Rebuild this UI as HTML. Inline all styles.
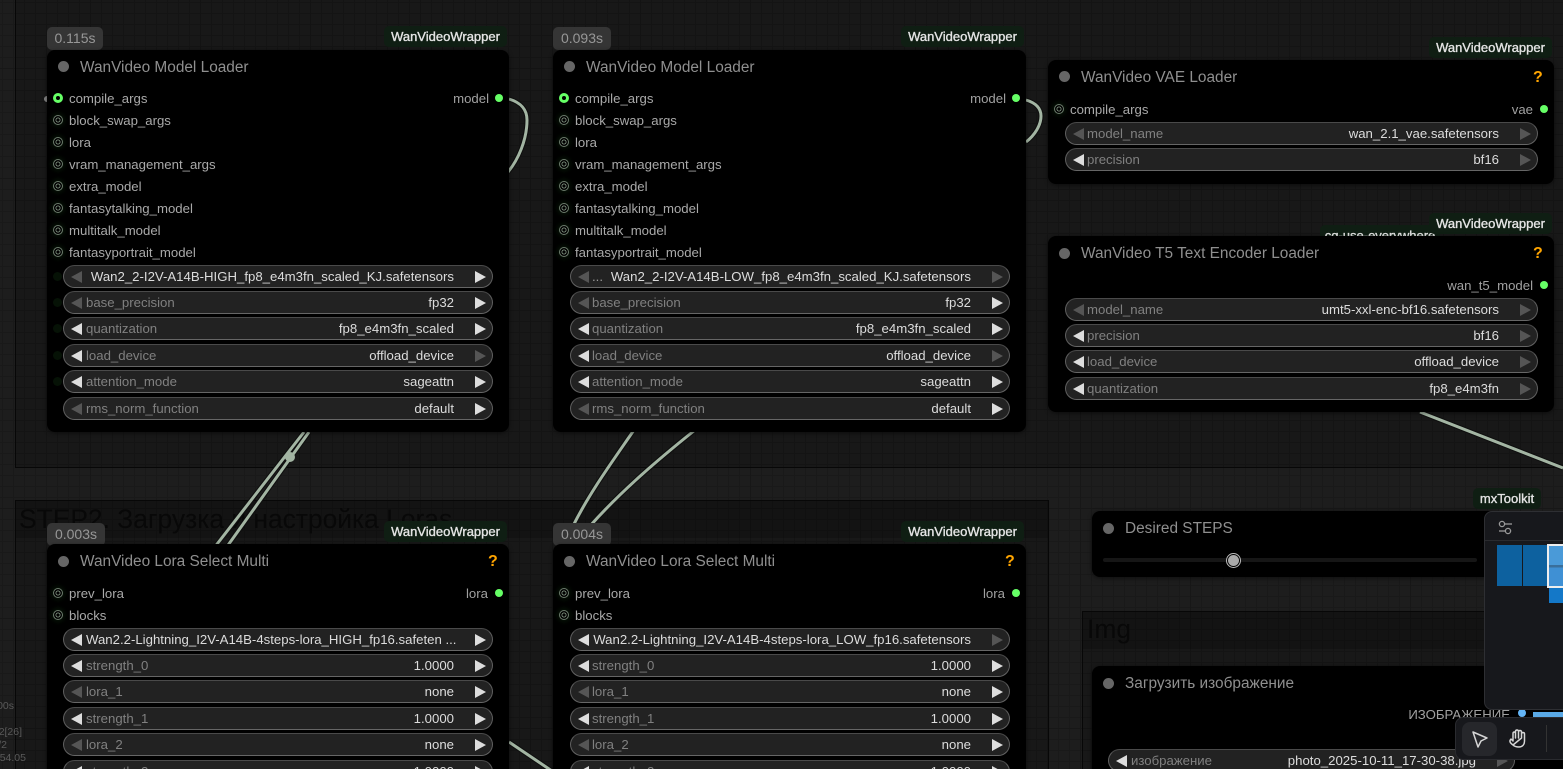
<!DOCTYPE html>
<html><head><meta charset="utf-8">
<style>
html,body{margin:0;padding:0;width:1563px;height:769px;overflow:hidden;background:#1d1d1d}
body{position:relative;font-family:"Liberation Sans","Noto Sans CJK SC",sans-serif}
.bg{position:absolute;left:0;top:0;width:1563px;height:769px;background-image:linear-gradient(90deg,#171717 1px,transparent 1px),linear-gradient(#171717 1px,transparent 1px),linear-gradient(90deg,#191919 1px,transparent 1px),linear-gradient(#191919 1px,transparent 1px);background-size:110px 110px,110px 110px,11px 11px,11px 11px;background-position:90px 0,0 68px,2px 0,0 2px}
.g{position:absolute;background:rgba(0,0,0,.17);border:1px solid #070707;box-sizing:border-box}
.band{position:absolute;background:rgba(0,0,0,.2)}
.gt{position:absolute;color:#080808;font-size:26.4px;line-height:30px;white-space:nowrap}
svg{position:absolute;left:0;top:0}
.n{position:absolute;background:#000;border-radius:8px;box-shadow:0 1px 4px rgba(0,0,0,.5)}
.t{position:absolute;color:#8f8f8f;font-size:15.4px;line-height:18px;white-space:nowrap;margin-top:1px}
.d0{position:absolute;width:11px;height:11px;border-radius:50%;background:#666}
.in{position:absolute;color:#a9a9a9;font-size:13.2px;line-height:16px;white-space:nowrap}
.out{position:absolute;color:#a0a0a0;font-size:13.2px;line-height:16px;white-space:nowrap}
.p{position:absolute;width:8px;height:8px;margin:-1px 0 0 -1px;border-radius:50%;border:1px solid #6d7d6d;box-sizing:content-box;background:radial-gradient(circle,#000 0 1.5px,#6d7d6d 1.6px 2.5px,#000 2.6px);box-shadow:0 0 4px 2px #061206}
.o{position:absolute;width:8px;height:8px;border-radius:50%;background:#66ff66}
.c{position:absolute;width:4px;height:4px;border-radius:50%;border:3px solid #66ff66;background:#000}
.gh{position:absolute;width:9px;height:9px;border-radius:50%;background:#061206}
.w{position:absolute;height:23px;box-sizing:border-box;background:#222;border:1px solid #5f5f5f;border-top-color:#4a4a4a;border-bottom-color:#666;border-radius:12px;font-size:13.2px;line-height:21.500px;white-space:nowrap}
.w b{font-weight:normal;position:absolute;left:22px;color:#808080}
.m b{left:21px}
.w u{text-decoration:none;position:absolute;right:38px;color:#dcdcdc}
.w i,.w s{position:absolute;top:4.5px;width:0;height:0;border-top:6px solid transparent;border-bottom:6px solid transparent}
.w i{left:7px;border-right:11px solid #ddd}
.w s{right:6px;border-left:11px solid #ddd}
.w i.x{border-right-color:#555}.w s.x{border-left-color:#555}
.bd{position:absolute;height:21px;background:#0f1e13;border-radius:5px;color:#e4e4e4;font-size:13px;font-weight:normal;-webkit-text-stroke:.35px #e4e4e4;line-height:21px;text-align:center;white-space:nowrap;overflow:hidden}
.tm{position:absolute;height:23px;background:#353535;border-radius:5px;color:#979797;font-size:14px;line-height:23px;text-align:center}
.q{position:absolute;color:#ffa500;font-size:16px;font-weight:bold;line-height:18px;margin-top:1px}
.st{position:absolute;color:#5a5a5a;font-size:10.5px;line-height:12px;white-space:nowrap;word-spacing:-3px}
</style></head><body>
<div class="bg"></div>
<div class="g" style="left:15px;top:-10px;width:1600px;height:478px"></div>
<div class="g" style="left:15px;top:500px;width:1034px;height:300px"></div>
<div class="band" style="left:16px;top:501px;width:1032px;height:37px"></div>
<div class="g" style="left:1082px;top:611px;width:500px;height:200px"></div>
<div class="band" style="left:1083px;top:612px;width:480px;height:37px"></div>
<div class="gt" style="left:19px;top:504px">STEP2. Загрузка и настройка Loras</div>
<div class="gt" style="left:1087px;top:614px">Img</div>

<svg width="1563" height="769" fill="none" stroke="#0e0e0e" stroke-width="5">
<path d="M509 99C522 103 527 110 527 120C527 140 518 160 508 172"/>
<path d="M1026 100C1036 103 1041 108 1041 116C1041 125 1035 135 1026 142"/>
<path d="M304 432L214 548"/><path d="M309 432L226 548"/>
<path d="M634 430C612 462 590 492 573 526"/><path d="M695 430C660 458 622 490 590 526"/>
<path d="M1420 412L1563 468"/>
<path d="M509 742L552 771"/>
</svg>
<svg width="1563" height="769" fill="none" stroke="#a3b5a3" stroke-width="3">
<path d="M509 99C522 103 527 110 527 120C527 140 518 160 508 172"/>
<path d="M1026 100C1036 103 1041 108 1041 116C1041 125 1035 135 1026 142"/>
<path d="M304 432L214 548"/><path d="M309 432L226 548"/>
<path d="M634 430C612 462 590 492 573 526"/><path d="M695 430C660 458 622 490 590 526"/>
<path d="M1420 412L1563 468"/>
<path d="M509 742L552 771"/>
<circle cx="290" cy="457" r="5" fill="#a3b5a3" stroke="none"/>
</svg>

<div class="tm" style="left:47px;top:27px;width:56px">0.115s</div>
<div class="bd" style="left:384px;top:26px;width:123px">WanVideoWrapper</div>
<div class="tm" style="left:553px;top:27px;width:58px">0.093s</div>
<div class="bd" style="left:901px;top:26px;width:123px">WanVideoWrapper</div>
<div class="bd" style="left:1429px;top:37px;width:123px">WanVideoWrapper</div>
<div class="bd" style="left:1320px;top:225px;width:120px;text-align:center">cg-use-everywhere</div>
<div class="bd" style="left:1429px;top:213px;width:123px">WanVideoWrapper</div>
<div class="tm" style="left:47px;top:523px;width:58px">0.003s</div>
<div class="bd" style="left:384px;top:521px;width:123px">WanVideoWrapper</div>
<div class="tm" style="left:553px;top:523px;width:58px">0.004s</div>
<div class="bd" style="left:901px;top:521px;width:123px">WanVideoWrapper</div>
<div class="bd" style="left:1473px;top:488px;width:68px">mxToolkit</div>

<div style="position:absolute;left:44px;top:96px;width:6px;height:6px;border-radius:50%;background:#888"></div>

<!-- Node 1 -->
<div class="n" style="left:47px;top:50px;width:462px;height:382px"></div>
<div class="d0" style="left:58px;top:61px"></div><div class="t" style="left:80px;top:58px">WanVideo Model Loader</div>
<div class="c" style="left:53px;top:93px"></div><div class="in" style="left:69px;top:91px">compile_args</div>
<div class="out" style="right:1074px;top:91px">model</div><div class="o" style="left:495px;top:94px"></div>
<div class="p" style="left:54px;top:116px"></div><div class="in" style="left:69px;top:113px">block_swap_args</div>
<div class="p" style="left:54px;top:138px"></div><div class="in" style="left:69px;top:135px">lora</div>
<div class="p" style="left:54px;top:160px"></div><div class="in" style="left:69px;top:157px">vram_management_args</div>
<div class="p" style="left:54px;top:182px"></div><div class="in" style="left:69px;top:179px">extra_model</div>
<div class="p" style="left:54px;top:204px"></div><div class="in" style="left:69px;top:201px">fantasytalking_model</div>
<div class="p" style="left:54px;top:226px"></div><div class="in" style="left:69px;top:223px">multitalk_model</div>
<div class="p" style="left:54px;top:248px"></div><div class="in" style="left:69px;top:245px">fantasyportrait_model</div>
<div class="gh" style="left:53px;top:272px"></div><div class="gh" style="left:53px;top:298px"></div><div class="gh" style="left:53px;top:324px"></div><div class="gh" style="left:53px;top:351px"></div><div class="gh" style="left:53px;top:377px"></div>
<div class="w" style="left:63px;top:265px;width:430px"><i class="x"></i><s></s><u>Wan2_2-I2V-A14B-HIGH_fp8_e4m3fn_scaled_KJ.safetensors</u></div>
<div class="w" style="left:63px;top:291px;width:430px"><i class="x"></i><s></s><b>base_precision</b><u>fp32</u></div>
<div class="w" style="left:63px;top:317px;width:430px"><i></i><s></s><b>quantization</b><u>fp8_e4m3fn_scaled</u></div>
<div class="w" style="left:63px;top:344px;width:430px"><i></i><s class="x"></s><b>load_device</b><u>offload_device</u></div>
<div class="w" style="left:63px;top:370px;width:430px"><i></i><s></s><b>attention_mode</b><u>sageattn</u></div>
<div class="w" style="left:63px;top:397px;width:430px"><i class="x"></i><s></s><b>rms_norm_function</b><u>default</u></div>

<!-- Node 2 -->
<div class="n" style="left:553px;top:50px;width:473px;height:382px"></div>
<div class="d0" style="left:564px;top:61px"></div><div class="t" style="left:586px;top:58px">WanVideo Model Loader</div>
<div class="c" style="left:559px;top:93px"></div><div class="in" style="left:575px;top:91px">compile_args</div>
<div class="out" style="right:557px;top:91px">model</div><div class="o" style="left:1012px;top:94px"></div>
<div class="p" style="left:560px;top:116px"></div><div class="in" style="left:575px;top:113px">block_swap_args</div>
<div class="p" style="left:560px;top:138px"></div><div class="in" style="left:575px;top:135px">lora</div>
<div class="p" style="left:560px;top:160px"></div><div class="in" style="left:575px;top:157px">vram_management_args</div>
<div class="p" style="left:560px;top:182px"></div><div class="in" style="left:575px;top:179px">extra_model</div>
<div class="p" style="left:560px;top:204px"></div><div class="in" style="left:575px;top:201px">fantasytalking_model</div>
<div class="p" style="left:560px;top:226px"></div><div class="in" style="left:575px;top:223px">multitalk_model</div>
<div class="p" style="left:560px;top:248px"></div><div class="in" style="left:575px;top:245px">fantasyportrait_model</div>
<div class="w m" style="left:570px;top:265px;width:440px"><i class="x"></i><s class="x"></s><b style="color:#999">...</b><u>Wan2_2-I2V-A14B-LOW_fp8_e4m3fn_scaled_KJ.safetensors</u></div>
<div class="w m" style="left:570px;top:291px;width:440px"><i class="x"></i><s></s><b>base_precision</b><u>fp32</u></div>
<div class="w m" style="left:570px;top:317px;width:440px"><i></i><s></s><b>quantization</b><u>fp8_e4m3fn_scaled</u></div>
<div class="w m" style="left:570px;top:344px;width:440px"><i></i><s class="x"></s><b>load_device</b><u>offload_device</u></div>
<div class="w m" style="left:570px;top:370px;width:440px"><i></i><s></s><b>attention_mode</b><u>sageattn</u></div>
<div class="w m" style="left:570px;top:397px;width:440px"><i class="x"></i><s></s><b>rms_norm_function</b><u>default</u></div>

<!-- VAE -->
<div class="n" style="left:1048px;top:60px;width:506px;height:124px"></div>
<div class="d0" style="left:1059px;top:71px"></div><div class="t" style="left:1081px;top:68px">WanVideo VAE Loader</div>
<div class="q" style="left:1533px;top:68px">?</div>
<div class="p" style="left:1055px;top:105px"></div><div class="in" style="left:1070px;top:102px">compile_args</div>
<div class="out" style="right:30px;top:102px">vae</div><div class="o" style="left:1540px;top:105px"></div>
<div class="w m" style="left:1065px;top:122px;width:473px"><i class="x"></i><s class="x"></s><b>model_name</b><u>wan_2.1_vae.safetensors</u></div>
<div class="w m" style="left:1065px;top:148px;width:473px"><i></i><s class="x"></s><b>precision</b><u>bf16</u></div>

<!-- T5 -->
<div class="n" style="left:1048px;top:236px;width:506px;height:176px"></div>
<div class="d0" style="left:1059px;top:248px"></div><div class="t" style="left:1081px;top:244px">WanVideo T5 Text Encoder Loader</div>
<div class="q" style="left:1533px;top:244px">?</div>
<div class="out" style="right:30px;top:278px">wan_t5_model</div><div class="o" style="left:1540px;top:281px"></div>
<div class="w m" style="left:1065px;top:298px;width:473px"><i class="x"></i><s class="x"></s><b>model_name</b><u>umt5-xxl-enc-bf16.safetensors</u></div>
<div class="w m" style="left:1065px;top:324px;width:473px"><i></i><s class="x"></s><b>precision</b><u>bf16</u></div>
<div class="w m" style="left:1065px;top:350px;width:473px"><i></i><s class="x"></s><b>load_device</b><u>offload_device</u></div>
<div class="w m" style="left:1065px;top:377px;width:473px"><i></i><s class="x"></s><b>quantization</b><u>fp8_e4m3fn</u></div>

<!-- Lora 1 -->
<div class="n" style="left:47px;top:544px;width:462px;height:240px"></div>
<div class="d0" style="left:58px;top:556px"></div><div class="t" style="left:80px;top:552px">WanVideo Lora Select Multi</div>
<div class="q" style="left:488px;top:552px">?</div>
<div class="p" style="left:54px;top:589px"></div><div class="in" style="left:69px;top:586px">prev_lora</div>
<div class="out" style="right:1075px;top:586px">lora</div><div class="o" style="left:495px;top:589px"></div>
<div class="p" style="left:54px;top:611px"></div><div class="in" style="left:69px;top:608px">blocks</div>
<div class="w" style="left:63px;top:628px;width:430px"><i></i><s></s><b style="color:#dcdcdc">Wan2.2-Lightning_I2V-A14B-4steps-lora_HIGH_fp16.safeten ...</b></div>
<div class="w" style="left:63px;top:654px;width:430px"><i></i><s></s><b>strength_0</b><u>1.0000</u></div>
<div class="w" style="left:63px;top:680px;width:430px"><i class="x"></i><s></s><b>lora_1</b><u>none</u></div>
<div class="w" style="left:63px;top:707px;width:430px"><i></i><s></s><b>strength_1</b><u>1.0000</u></div>
<div class="w" style="left:63px;top:733px;width:430px"><i class="x"></i><s></s><b>lora_2</b><u>none</u></div>
<div class="w" style="left:63px;top:760px;width:430px"><i></i><s></s><b>strength_2</b><u>1.0000</u></div>

<!-- Lora 2 -->
<div class="n" style="left:553px;top:544px;width:473px;height:240px"></div>
<div class="d0" style="left:564px;top:556px"></div><div class="t" style="left:586px;top:552px">WanVideo Lora Select Multi</div>
<div class="q" style="left:1005px;top:552px">?</div>
<div class="p" style="left:560px;top:589px"></div><div class="in" style="left:575px;top:586px">prev_lora</div>
<div class="out" style="right:558px;top:586px">lora</div><div class="o" style="left:1012px;top:589px"></div>
<div class="p" style="left:560px;top:611px"></div><div class="in" style="left:575px;top:608px">blocks</div>
<div class="w m" style="left:570px;top:628px;width:440px"><i></i><s class="x"></s><u>Wan2.2-Lightning_I2V-A14B-4steps-lora_LOW_fp16.safetensors</u></div>
<div class="w m" style="left:570px;top:654px;width:440px"><i></i><s></s><b>strength_0</b><u>1.0000</u></div>
<div class="w m" style="left:570px;top:680px;width:440px"><i class="x"></i><s></s><b>lora_1</b><u>none</u></div>
<div class="w m" style="left:570px;top:707px;width:440px"><i></i><s></s><b>strength_1</b><u>1.0000</u></div>
<div class="w m" style="left:570px;top:733px;width:440px"><i class="x"></i><s></s><b>lora_2</b><u>none</u></div>
<div class="w m" style="left:570px;top:760px;width:440px"><i></i><s></s><b>strength_2</b><u>1.0000</u></div>

<!-- Desired STEPS -->
<div class="n" style="left:1092px;top:511px;width:410px;height:66px"></div>
<div class="d0" style="left:1103px;top:523px"></div><div class="t" style="left:1125px;top:519px">Desired STEPS</div>
<div style="position:absolute;left:1103px;top:558px;width:374px;height:4px;border-radius:2px;background:#161616"></div>
<div style="position:absolute;left:1226px;top:553px;width:13px;height:13px;border:1px solid #bbb;border-radius:50%;background:#000"></div>
<div style="position:absolute;left:1228px;top:555px;width:11px;height:11px;border-radius:50%;background:#aaa"></div>

<!-- Load image -->
<div class="n" style="left:1092px;top:666px;width:480px;height:120px"></div>
<div class="d0" style="left:1103px;top:678px"></div><div class="t" style="left:1125px;top:674px">Загрузить изображение</div>
<div class="out" style="right:53px;top:707px">ИЗОБРАЖЕНИЕ</div>
<div class="o" style="left:1518px;top:709px;background:#64b5f6"></div>
<div style="position:absolute;left:1533px;top:712px;width:30px;height:5px;background:#5aa9e6"></div>
<div class="w" style="left:1108px;top:749px;width:407px"><i></i><s class="x"></s><b>изображение</b><u>photo_2025-10-11_17-30-38.jpg</u></div>

<!-- Minimap -->
<div style="position:absolute;left:1484px;top:511px;width:90px;height:199px;box-sizing:border-box;background:#17181c;border:1px solid #2e2f33;border-radius:8px;overflow:hidden">
<div style="position:absolute;left:0;top:28px;width:90px;height:1px;background:#2a2b2f"></div>
<div style="position:absolute;left:12px;top:33px;width:25px;height:41px;background:#0d619f"></div>
<div style="position:absolute;left:38px;top:33px;width:24px;height:41px;background:#0d619f"></div>
<div style="position:absolute;left:64px;top:73px;width:20px;height:18px;background:#1478c8"></div>
<div style="position:absolute;left:62px;top:32px;width:30px;height:44px;box-sizing:border-box;border:2px solid #eee;background:linear-gradient(#4a9ad8 0 48%,#3a6f9b 48% 54%,#3f90d4 54%)"></div>
</div>
<svg width="1563" height="769" fill="none" stroke="#9a9a9a" stroke-width="1.3">
<circle cx="1502" cy="524" r="2.6"/><path d="M1505 524H1512"/><circle cx="1508" cy="531" r="2.6"/><path d="M1499 531H1505"/>
</svg>

<!-- Toolbar -->
<div style="position:absolute;left:1455px;top:717px;width:120px;height:43px;box-sizing:border-box;background:#17181c;border:1px solid #2a2b2f;border-radius:8px"></div>
<div style="position:absolute;left:1462px;top:722px;width:35px;height:34px;background:#26272b;border-radius:8px"></div>
<div style="position:absolute;left:1546px;top:725px;width:1px;height:27px;background:#333"></div>
<svg width="1563" height="769" fill="none" stroke="#d6d6d6" stroke-width="1.5" stroke-linejoin="round" stroke-linecap="round">
<path d="M1473 732L1487 738L1481 741L1478 747Z"/>
<path d="M1513 745C1510 743 1509 741 1511 739L1513 741V733.500C1513 731.500 1515.500 731.500 1515.500 733.500V738M1515.500 738V731.500C1515.500 729.500 1518.500 729.500 1518.500 731.500V738M1518.500 738V732C1518.500 730 1521.500 730 1521.500 732V738M1521.500 738V734C1521.500 732 1524.500 732 1524.500 734V741C1524.500 745 1522 747 1519 747C1516.500 747 1514.500 746.500 1513 745Z"/>
</svg>

<div class="st" style="right:1549px;top:700px">00s</div>
<div class="st" style="right:1541px;top:726px">2 [26]</div>
<div class="st" style="right:1556px;top:739px">/2</div>
<div class="st" style="right:1537px;top:752px">:54.05</div>
</body></html>
